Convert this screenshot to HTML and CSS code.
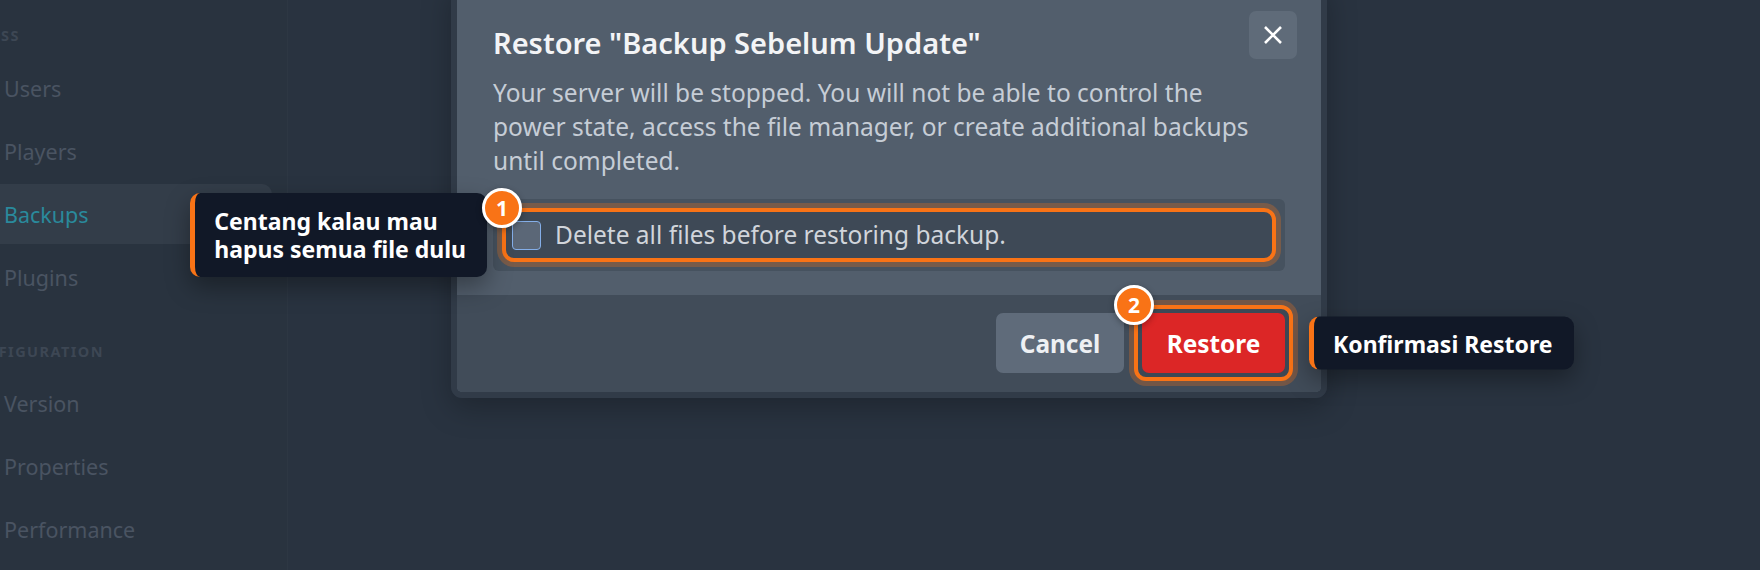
FILE: index.html
```html
<!DOCTYPE html>
<html lang="en">
<head>
<meta charset="utf-8">
<title>Restore backup</title>
<link rel="stylesheet" href="styles.css">
</head>
<body>
<div class="app">
  <aside class="sidebar">
    <div class="nav-heading nav-heading--access">Access</div>
    <div class="nav-item">Users</div>
    <div class="nav-item">Players</div>
    <div class="nav-item nav-item--active">Backups</div>
    <div class="nav-item">Plugins</div>
    <div class="nav-heading nav-heading--config">Configuration</div>
    <div class="nav-item">Version</div>
    <div class="nav-item">Properties</div>
    <div class="nav-item">Performance</div>
  </aside>
  <main class="main">
    <div class="modal-frame">
      <div class="modal">
        <div class="modal-body">
          <button class="close" type="button" aria-label="Close">
            <svg width="20" height="20" viewBox="0 0 20 20"><path d="M2 2L18 18M18 2L2 18" stroke="#fff" stroke-width="2.6" fill="none"/></svg>
          </button>
          <h2 class="modal-title">Restore "Backup Sebelum Update"</h2>
          <p class="modal-desc">Your server will be stopped. You will not be able to control the power state, access the file manager, or create additional backups until completed.</p>
          <div class="option-box">
            <label class="option highlight">
              <span class="badge">1</span>
              <span class="tip tip--left">Centang kalau mau<br>hapus semua file dulu</span>
              <span class="checkbox"></span>
              <span class="option-text">Delete all files before restoring backup.</span>
            </label>
          </div>
        </div>
        <div class="modal-footer">
          <button class="btn btn-cancel" type="button">Cancel</button>
          <div class="highlight highlight--btn">
            <span class="badge">2</span>
            <button class="btn btn-restore" type="button">Restore</button>
            <span class="tip tip--right">Konfirmasi Restore</span>
          </div>
        </div>
      </div>
    </div>
  </main>
</div>
</body>
</html>
```
FILE: styles.css
```css
html, body {
  margin: 0;
  height: 570px;
  overflow: hidden;
}
body {
  background: #293340;
  font-family: "Noto Sans", "Open Sans", sans-serif;
}
.app {
  display: flex;
  height: 570px;
}
.sidebar {
  width: 288px;
  flex: none;
  box-sizing: border-box;
  background: #29333f;
  border-right: 1px solid #2d3743;
  padding: 25px 15px 0 0;
  overflow: hidden;
}
.nav-heading {
  font-size: 14.5px;
  font-weight: 700;
  letter-spacing: 0.1em;
  line-height: 20px;
  color: #3d4754;
  text-transform: uppercase;
  white-space: nowrap;
  margin-bottom: 13px;
}
.nav-heading--access { margin-left: -41px; }
.nav-heading--config {
  margin-left: -38px;
  margin-top: 34px;
  margin-bottom: 12px;
}
.nav-item {
  height: 60px;
  margin-bottom: 3px;
  display: flex;
  align-items: center;
  padding-left: 4px;
  font-size: 21.5px;
  color: #4a5462;
  border-radius: 0 10px 10px 0;
}
.nav-item--active {
  background: #333d49;
  color: #2a8a9c;
}
.main {
  flex: 1;
  padding-left: 163px;
}
.modal-frame {
  width: 864px;
  border: 6px solid #313b48;
  border-radius: 11px;
  margin-top: -19px;
  box-shadow: 0 10px 30px rgba(0, 0, 0, 0.25);
}
.modal {
  background: #525e6c;
  border-radius: 5px;
  position: relative;
}
.modal-body {
  position: relative;
  padding: 36px 36px 24px;
}
.close {
  position: absolute;
  top: 24px;
  right: 24px;
  width: 48px;
  height: 48px;
  padding: 0;
  border: 0;
  border-radius: 7px;
  background: #5f6b79;
  display: flex;
  align-items: center;
  justify-content: center;
}
.modal-title {
  margin: 0;
  font-size: 29px;
  line-height: 39px;
  font-weight: 600;
  color: #f3f4f6;
}
.modal-desc {
  margin: 14px 0 0;
  font-size: 24.5px;
  line-height: 34px;
  color: #c6cdd6;
  max-width: 785px;
}
.option-box {
  margin-top: 21px;
  background: #46525f;
  border-radius: 6px;
  padding: 9px;
}
.highlight {
  position: relative;
  border: 4px solid #f97316;
  border-radius: 12px;
  box-shadow: 0 0 0 5px rgba(249, 115, 22, 0.28);
}
.option {
  display: flex;
  align-items: center;
  gap: 14px;
  padding: 8px 6px;
  background: #3e4956;
}
.checkbox {
  width: 27px;
  height: 27px;
  flex: none;
  border: 1.5px solid #84aee8;
  border-radius: 4px;
  background: #5b6777;
}
.option-text {
  font-size: 24.5px;
  line-height: 30px;
  color: #d1d5db;
}
.modal-footer {
  display: flex;
  justify-content: flex-end;
  align-items: center;
  gap: 18px;
  padding: 18px 36px 19px;
  background: #414c59;
  border-radius: 0 0 5px 5px;
}
.btn {
  height: 60px;
  border: 0;
  border-radius: 7px;
  font-family: inherit;
  font-size: 24.4px;
  font-weight: 700;
  color: #fff;
  padding: 0;
}
.btn-cancel {
  width: 128px;
  background: #5f6b7a;
  color: #eef0f3;
}
.btn-restore {
  width: 143px;
  background: #dc2626;
  display: block;
}
.highlight--btn {
  padding: 4px;
  margin: -8px;
  background: #3d4855;
}
.badge {
  position: absolute;
  top: -24px;
  left: -24px;
  width: 34px;
  height: 34px;
  border: 3px solid #fff;
  border-radius: 50%;
  background: #f97316;
  color: #fff;
  font-size: 21px;
  font-weight: 700;
  display: flex;
  align-items: center;
  justify-content: center;
  z-index: 3;
  box-shadow: 0 2px 6px rgba(0, 0, 0, 0.3);
}
.tip {
  position: absolute;
  top: 50%;
  transform: translateY(-50%);
  z-index: 2;
  background: #111827;
  color: #fff;
  font-size: 23px;
  font-weight: 700;
  line-height: 28px;
  padding: 14px 21px 14px 19px;
  border-left: 5px solid #f97316;
  border-radius: 10px;
  white-space: nowrap;
  box-shadow: 0 10px 25px rgba(0, 0, 0, 0.35);
}
.tip--left { right: calc(100% + 19px); }
.tip--right {
  left: calc(100% + 20px);
  padding-top: 12.5px;
  padding-bottom: 12.5px;
}
```
